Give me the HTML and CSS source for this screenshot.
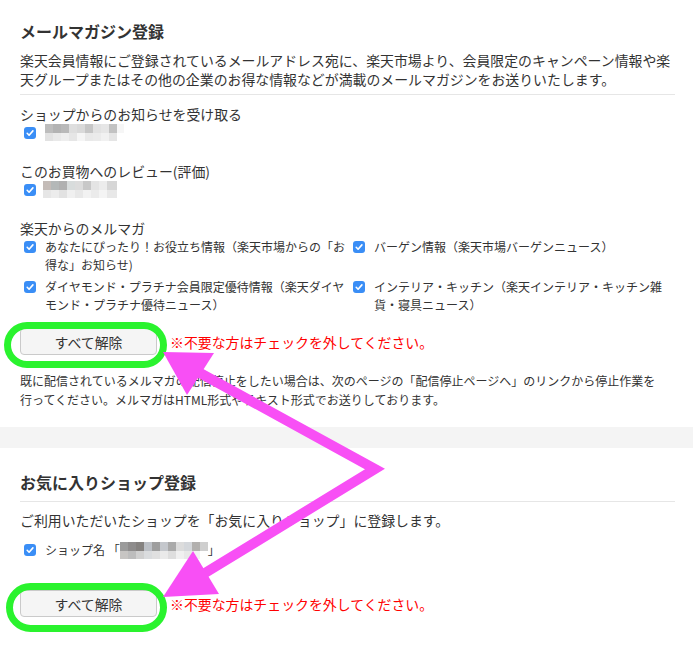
FILE: index.html
```html
<!DOCTYPE html>
<html lang="ja">
<head>
  <meta charset="UTF-8" />
  <meta name="viewport" content="width=device-width, initial-scale=1.0" />
  <title>メールマガジン登録</title>
  <link rel="stylesheet" href="styles.css">
</head>
<body>
  <section class="section">
    <h2>メールマガジン登録</h2>
    <p class="intro">楽天会員情報にご登録されているメールアドレス宛に、楽天市場より、会員限定のキャンペーン情報や楽天グループまたはその他の企業のお得な情報などが満載のメールマガジンをお送りいたします。</p>

    <div class="group first">
      <p class="group-title">ショップからのお知らせを受け取る</p>
      <label class="check-row">
        <span class="cb"><svg viewBox="0 0 12 12" width="12" height="12"><rect width="12" height="12" rx="3" fill="#3a8ef6"/><path d="M3.2 6.3 L5.1 8.2 L8.9 3.9" fill="none" stroke="#fff" stroke-width="1.6" stroke-linecap="round" stroke-linejoin="round"/></svg></span>
        <span class="mosaic m1"></span>
      </label>
    </div>

    <div class="group">
      <p class="group-title">このお買物へのレビュー(評価)</p>
      <label class="check-row">
        <span class="cb"><svg viewBox="0 0 12 12" width="12" height="12"><rect width="12" height="12" rx="3" fill="#3a8ef6"/><path d="M3.2 6.3 L5.1 8.2 L8.9 3.9" fill="none" stroke="#fff" stroke-width="1.6" stroke-linecap="round" stroke-linejoin="round"/></svg></span>
        <span class="mosaic m2"></span>
      </label>
    </div>

    <div class="group">
      <p class="group-title">楽天からのメルマガ</p>
      <div class="options">
        <label class="option">
          <span class="cb"><svg viewBox="0 0 12 12" width="12" height="12"><rect width="12" height="12" rx="3" fill="#3a8ef6"/><path d="M3.2 6.3 L5.1 8.2 L8.9 3.9" fill="none" stroke="#fff" stroke-width="1.6" stroke-linecap="round" stroke-linejoin="round"/></svg></span>
          <span>あなたにぴったり！お役立ち情報（楽天市場からの「お得な」お知らせ)</span>
        </label>
        <label class="option">
          <span class="cb"><svg viewBox="0 0 12 12" width="12" height="12"><rect width="12" height="12" rx="3" fill="#3a8ef6"/><path d="M3.2 6.3 L5.1 8.2 L8.9 3.9" fill="none" stroke="#fff" stroke-width="1.6" stroke-linecap="round" stroke-linejoin="round"/></svg></span>
          <span>バーゲン情報（楽天市場バーゲンニュース）</span>
        </label>
        <label class="option">
          <span class="cb"><svg viewBox="0 0 12 12" width="12" height="12"><rect width="12" height="12" rx="3" fill="#3a8ef6"/><path d="M3.2 6.3 L5.1 8.2 L8.9 3.9" fill="none" stroke="#fff" stroke-width="1.6" stroke-linecap="round" stroke-linejoin="round"/></svg></span>
          <span>ダイヤモンド・プラチナ会員限定優待情報（楽天ダイヤモンド・プラチナ優待ニュース）</span>
        </label>
        <label class="option">
          <span class="cb"><svg viewBox="0 0 12 12" width="12" height="12"><rect width="12" height="12" rx="3" fill="#3a8ef6"/><path d="M3.2 6.3 L5.1 8.2 L8.9 3.9" fill="none" stroke="#fff" stroke-width="1.6" stroke-linecap="round" stroke-linejoin="round"/></svg></span>
          <span>インテリア・キッチン（楽天インテリア・キッチン雑貨・寝具ニュース）</span>
        </label>
      </div>
    </div>

    <div class="actions">
      <button type="button" class="btn">すべて解除</button>
      <span class="warn">※不要な方はチェックを外してください。</span>
    </div>

    <p class="note">既に配信されているメルマガの配信停止をしたい場合は、次のページの「配信停止ページへ」のリンクから停止作業を行ってください。メルマガはHTML形式やテキスト形式でお送りしております。</p>
  </section>

  <div class="band"></div>

  <section class="section second">
    <h2 class="with-line">お気に入りショップ登録</h2>
    <p class="lead">ご利用いただいたショップを「お気に入りショップ」に登録します。</p>
    <label class="check-row shop">
      <span class="cb"><svg viewBox="0 0 12 12" width="12" height="12"><rect width="12" height="12" rx="3" fill="#3a8ef6"/><path d="M3.2 6.3 L5.1 8.2 L8.9 3.9" fill="none" stroke="#fff" stroke-width="1.6" stroke-linecap="round" stroke-linejoin="round"/></svg></span>
      <span>ショップ名 「</span><span class="mosaic m3"></span><span>」</span>
    </label>
    <div class="actions second-actions">
      <button type="button" class="btn">すべて解除</button>
      <span class="warn">※不要な方はチェックを外してください。</span>
    </div>
  </section>

  <!-- 注釈（緑の枠と矢印） -->
  <svg class="marks" width="693" height="649" viewBox="0 0 693 649">
    <rect x="7.5" y="325.5" width="156" height="39" rx="19.5" fill="none" stroke="#2af32e" stroke-width="7"/>
    <rect x="9.5" y="586.5" width="154" height="42" rx="21" fill="none" stroke="#2af32e" stroke-width="7"/>
    <polyline points="200,373 375,469 205,573" fill="none" stroke="#f84ff5" stroke-width="10" stroke-linejoin="miter"/>
    <polygon points="163,352 214,353 187,395" fill="#f84ff5"/>
    <polygon points="163,597 193,551 219,594" fill="#f84ff5"/>
  </svg>
</body>
</html>
```

FILE: styles.css
```css
body {
  font-family: "Noto Sans CJK JP", sans-serif;
  margin: 0;
  color: #333;
  background: #fff;
  position: relative;
}
.section {
  padding: 20px 18px 18px 20px;
}
.section h2 {
  margin: 0;
  font-size: 16px;
  line-height: 22px;
  font-weight: bold;
}
.intro {
  margin: 9px 0 0;
  font-size: 13.9px;
  line-height: 19px;
  padding-bottom: 5px;
  border-bottom: 1px solid #e6e6e6;
}
.group {
  margin-top: 21px;
}
.group.first {
  margin-top: 10px;
}
.group-title {
  margin: 0;
  font-size: 13.9px;
  line-height: 19px;
}
.check-row {
  display: flex;
  align-items: center;
  font-size: 12px;
  line-height: 18px;
}
.cb {
  display: block;
  width: 12px;
  height: 12px;
  flex-shrink: 0;
  margin: 0 9px 0 4px;
}
.cb svg {
  display: block;
}
.options {
  display: grid;
  grid-template-columns: 329px 1fr;
  row-gap: 4px;
  padding-right: 10px;
}
.option {
  display: flex;
  align-items: flex-start;
  font-size: 12px;
  line-height: 18px;
}
.option .cb {
  margin-top: 3px;
}
.mosaic {
  display: block;
  height: 17px;
}
.m1 {
  width: 79px;
  background:
    linear-gradient(to right, #bdbdbd 0 8px, #b3b3b3 8px 16px, #b9b9b9 16px 24px, #dedede 24px 32px, #d9d9d9 32px 40px, #c6c6c6 40px 48px, #e2e2e2 48px 56px, #e6e6e6 56px 64px, #c2c2c2 64px 72px, #f6f6f6 72px) top / 100% 9px no-repeat,
    linear-gradient(to right, #e2e2e2 0 8px, #e9e9e9 8px 16px, #eeeeee 16px 24px, #e6e6e6 24px 32px, #f5f5f5 32px 40px, #e9e9e9 40px 48px, #ebebeb 48px 56px, #f1f1f1 56px 64px, #e5e5e5 64px 72px, #fff 72px) bottom / 100% 8px no-repeat;
}
.m2 {
  width: 74px;
  margin-left: -2px;
  background:
    linear-gradient(to right, #c4bcb8 0 8px, #b4b8b8 8px 16px, #b0b0b0 16px 24px, #d8dcdc 24px 32px, #dcdcdc 32px 40px, #c8c8c8 40px 48px, #e4e4e4 48px 56px, #ececec 56px 64px, #d6d6d6 64px) top / 100% 9px no-repeat,
    linear-gradient(to right, #e6e6e6 0 8px, #ececec 8px 16px, #e2e2e2 16px 24px, #f0f0f0 24px 32px, #e8e8e8 32px 40px, #f2f2f2 40px 48px, #ebebeb 48px 56px, #f4f4f4 56px 64px, #e8e8e8 64px) bottom / 100% 8px no-repeat;
}
.m3 {
  width: 88px;
  background:
    linear-gradient(to right, #9b9b9b 0 8px, #8e8c8c 8px 16px, #858280 16px 24px, #bcc0c6 24px 32px, #9e9e9e 32px 40px, #c4c7cc 40px 48px, #aaaaaa 48px 56px, #dcdcdc 56px 64px, #d4d7db 64px 72px, #b2b0ae 72px 80px, #cfcfcf 80px) top / 100% 9px no-repeat,
    linear-gradient(to right, #c7c5c3 0 8px, #bdbdbd 8px 16px, #d0d0d0 16px 24px, #dadcde 24px 32px, #e0e0e0 32px 40px, #eaeaea 40px 48px, #dedede 48px 56px, #f0f0f0 56px 64px, #e8e8e8 64px 72px, #f2f2f2 72px 80px, #fff 80px) bottom / 100% 8px no-repeat;
}
.actions {
  display: flex;
  align-items: center;
  margin-top: 14px;
}
.btn {
  width: 137px;
  height: 27px;
  padding: 0;
  font-family: inherit;
  font-size: 13.9px;
  color: #333;
  background: #f5f5f5;
  border: 1px solid #cacaca;
  border-radius: 4px;
}
.warn {
  margin-left: 13px;
  font-size: 13.9px;
  color: #f00;
}
.note {
  margin: 16px 0 0;
  max-width: 640px;
  font-size: 12px;
  line-height: 19px;
}
.band {
  height: 21px;
  background: #f4f4f4;
}
.second {
  padding-top: 23px;
}
.with-line {
  padding-bottom: 8px;
  border-bottom: 1px solid #e6e6e6;
}
.lead {
  margin: 9px 0 0;
  font-size: 13.9px;
  line-height: 19px;
}
.shop {
  margin-top: 11px;
}
.second-actions {
  margin-top: 31px;
}
.marks {
  position: absolute;
  top: 0;
  left: 0;
  pointer-events: none;
}
```
